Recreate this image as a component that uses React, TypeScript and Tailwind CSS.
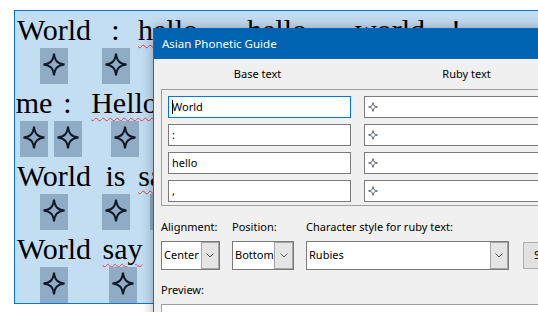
const serif = "font-['Liberation_Serif','Times_New_Roman',serif]";

type Unit = { t: string; c: string; sq?: boolean };

const lines: Unit[][] = [
  [
    { t: "World", c: "w-[78px]" },
    { t: ":", c: "ml-[8px] w-[29px]" },
    { t: "hello", c: "ml-[8px] w-[60px]", sq: true },
    { t: "hello", c: "ml-[49px] w-[60px]", sq: true },
    { t: "world", c: "ml-[48px] w-[70px]" },
    { t: "!", c: "ml-[17px] w-[28px]" },
  ],
  [
    { t: "me", c: "w-[38px]" },
    { t: ":", c: "w-[29px]" },
    { t: "Hello", c: "ml-[9px] w-[67px]", sq: true },
  ],
  [
    { t: "World", c: "w-[78px]" },
    { t: "is", c: "ml-[8px] w-[29px]" },
    { t: "says", c: "ml-[8px] w-[52px]", sq: true },
  ],
  [
    { t: "World", c: "w-[78px]" },
    { t: "say", c: "ml-[9px] w-[41px]", sq: true },
  ],
];

function Star({ w, h, sw }: { w: number; h: number; sw: number }) {
  return (
    <svg width={w} height={h} viewBox="0 0 24 24" preserveAspectRatio="none">
      <path
        d="M12 1.5 C12.9 8.6 15.4 11.1 22.5 12 C15.4 12.9 12.9 15.4 12 22.5 C11.1 15.4 8.6 12.9 1.5 12 C8.6 11.1 11.1 8.6 12 1.5 Z"
        fill="none"
        stroke="#0c1a2c"
        strokeWidth={sw}
      />
    </svg>
  );
}

function Chevron() {
  return (
    <svg width="8" height="5" viewBox="0 0 8 5">
      <polyline points="0.5,0.5 4,4 7.5,0.5" fill="none" stroke="#555" strokeWidth="1" />
    </svg>
  );
}

function Combo({ label, arrow }: { label: string; arrow: string }) {
  return (
    <div className="h-[29px] bg-white border border-[#7a7a7a] flex items-stretch">
      <div className="flex-1 flex items-center pl-[2px]">{label}</div>
      <div className={`${arrow} bg-[#e5e5e5] border border-[#a6a6a6] flex items-center justify-center`}>
        <Chevron />
      </div>
    </div>
  );
}

const baseTexts = ["World", ":", "hello", ","];

export default function App() {
  return (
    <div className="relative w-[538px] h-[312px] overflow-hidden bg-white">
      {/* document selection */}
      <div className="mt-[10px] ml-[14px] w-[600px] border-t border-l border-b border-[#0078d7] bg-[#c3ddf3] flex flex-col">
        {lines.map((line, i) => (
          <div key={i} className="flex items-start">
            {line.map((u, j) => (
              <div key={j} className={`${u.c} shrink-0 flex flex-col items-center`}>
                <span
                  className={`${serif} text-[30px] leading-[37px] h-[37px] whitespace-nowrap text-black ${
                    u.sq ? "underline decoration-wavy decoration-[#d9434f] decoration-1 underline-offset-[4px]" : ""
                  }`}
                >
                  {u.t}
                </span>
                <div className="h-[36px] flex justify-center">
                  <div className="w-[28px] h-full bg-[#90acc4] flex items-center justify-center pb-[3px]">
                    <Star w={24} h={25} sw={2} />
                  </div>
                </div>
              </div>
            ))}
          </div>
        ))}
      </div>

      {/* dialog */}
      <div className="absolute left-[153px] top-[28px] w-[420px] h-[300px] bg-[#f0f0f0] border-l border-[#1a6cb3] shadow-[0_0_12px_rgba(0,0,0,0.3)] font-['Noto_Sans',sans-serif] text-[11px] text-black">
        <div className="h-[31px] bg-[#0063b1] text-white flex items-center pl-[8px] text-[11.5px]">Asian Phonetic Guide</div>
        <div className="pl-[7px]">
          <div className="h-[30px] flex items-center pl-[7px] gap-[13px]">
            <div className="w-[185px] text-center">Base text</div>
            <div className="w-[220px] text-center">Ruby text</div>
          </div>
          <div className="w-[500px] border border-[#a0a0a0] pt-[6px] pl-[6px] pb-[3px] flex flex-col gap-[6px]">
            {baseTexts.map((b, i) => (
              <div key={i} className="flex gap-[13px]">
                <div
                  className={`w-[185px] h-[22px] bg-white border flex items-center pl-[3px] ${
                    i === 0 ? "border-[#0078d7]" : "border-[#7a7a7a]"
                  }`}
                >
                  {i === 0 && <span className="w-px h-[14px] bg-black" />}
                  <span className={i === 0 ? "ml-[-1px]" : ""}>{b}</span>
                </div>
                <div className="w-[300px] h-[22px] bg-white border border-[#7a7a7a] flex items-center pl-[3px]">
                  <Star w={10} h={10} sw={1.6} />
                </div>
              </div>
            ))}
          </div>

          <div className="mt-[13px] grid grid-cols-[59px_62px_203px_80px] gap-x-[12px] gap-y-[6px]">
            <div className="h-[16px] leading-[16px] whitespace-nowrap">Alignment:</div>
            <div className="h-[16px] leading-[16px] whitespace-nowrap">Position:</div>
            <div className="h-[16px] leading-[16px] whitespace-nowrap">Character style for ruby text:</div>
            <div />
            <Combo label="Center" arrow="w-[18px]" />
            <Combo label="Bottom" arrow="w-[19px]" />
            <Combo label="Rubies" arrow="w-[18px]" />
            <div className="ml-[2px] mt-[1px] h-[27px] bg-[#e1e1e1] border border-[#adadad] flex items-center pl-[10px]">
              Style...
            </div>
          </div>

          <div className="mt-[12px] h-[16px] leading-[16px]">Preview:</div>
          <div className="mt-[6px] w-[500px] h-[60px] bg-white border border-[#a0a0a0]" />
        </div>
      </div>
    </div>
  );
}
